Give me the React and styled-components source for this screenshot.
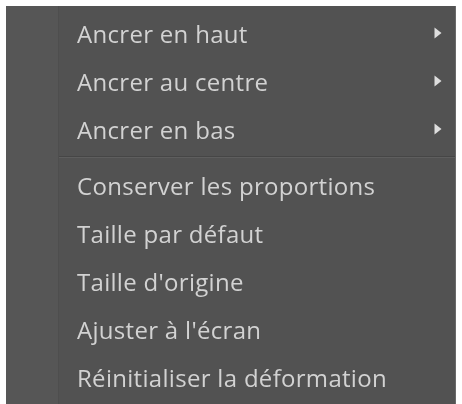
import React from "react";
import styled, { createGlobalStyle } from "styled-components";

const Global = createGlobalStyle`
  html, body { margin: 0; padding: 0; background: #ffffff; }
  body { width: 462px; height: 404px; overflow: hidden; }
`;

const Page = styled.div`
  padding: 6px 0 0 6px;
  width: 462px;
  height: 404px;
  box-sizing: border-box;
`;

const Menu = styled.div`
  width: 450px;
  height: 398px;
  box-sizing: border-box;
  background: #525252;
  border-right: 1px solid #6a6a6a;
  display: grid;
  grid-template-columns: 53px 1fr;
  font-family: "Open Sans", "Noto Sans", sans-serif;
  filter: blur(0.7px);
`;

const Gutter = styled.div`
  background: #565656;
  border-right: 1px solid #4e4e4e;
`;

const List = styled.div`
  display: flex;
  flex-direction: column;
  padding-top: 3px;
`;

const Item = styled.div`
  height: 48px;
  display: flex;
  align-items: center;
  justify-content: space-between;
  padding: 0 13px 0 18px;
  color: #d2d2d2;
  font-size: 24px;
  letter-spacing: 0.3px;
  white-space: nowrap;
`;

const Separator = styled.div`
  height: 8px;
  display: flex;
  flex-direction: column;
  justify-content: center;
  &::before {
    content: "";
    display: block;
    height: 1px;
    background: #464646;
  }
  &::after {
    content: "";
    display: block;
    height: 1px;
    background: #5e5e5e;
  }
`;

const Arrow = () => (
  <svg width="8" height="12" viewBox="0 0 8 12">
    <path d="M0.5 0.5 L7.5 6 L0.5 11.5 Z" fill="#dedede" />
  </svg>
);

const groups = [
  ["Ancrer en haut", "Ancrer au centre", "Ancrer en bas"],
  [
    "Conserver les proportions",
    "Taille par défaut",
    "Taille d'origine",
    "Ajuster à l'écran",
    "Réinitialiser la déformation",
  ],
];

export default function App() {
  return (
    <>
      <Global />
      <Page>
        <Menu>
          <Gutter />
          <List>
            {groups[0].map((t) => (
              <Item key={t}>
                <span>{t}</span>
                <Arrow />
              </Item>
            ))}
            <Separator />
            {groups[1].map((t) => (
              <Item key={t}>
                <span>{t}</span>
              </Item>
            ))}
          </List>
        </Menu>
      </Page>
    </>
  );
}
